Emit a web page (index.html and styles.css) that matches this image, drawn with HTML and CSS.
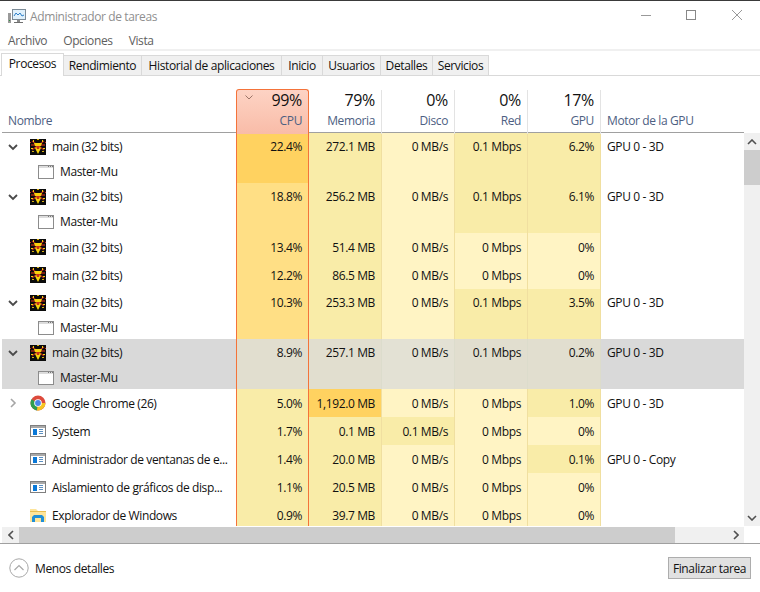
FILE: index.html
```html
<!DOCTYPE html>
<html>
<head>
	<title>Administrador de tareas</title>
	<link rel="stylesheet" href="styles.css">
</head>
<body>
	<svg class="defs" width="0" height="0">
		<symbol id="ico-main" viewBox="0 0 16 16">
			<rect width="16" height="16" fill="#0b0b0b"/>
			<path d="M2 2l12 9M14 2L2 11" stroke="#a8241a" stroke-width="1.500"/>
			<path d="M1 5h14v2H1z" fill="#7a1c12"/>
			<path d="M4 4h8l-1 3H9l2 2-3 6-3-6 2-2H5z" fill="#f7d20c"/>
			<path d="M6 7h4l-1 3H7z" fill="#c8321c"/>
			<rect x="3" y="1" width="1" height="2" fill="#f7d20c"/>
			<rect x="7" y="0" width="2" height="1" fill="#d8b010"/>
			<rect x="12" y="1" width="1" height="2" fill="#f7d20c"/>
			<rect x="1" y="9" width="2" height="1" fill="#f7d20c"/>
			<rect x="13" y="9" width="2" height="1" fill="#f7d20c"/>
			<rect x="2" y="12" width="2" height="1" fill="#d8b010"/>
			<rect x="12" y="12" width="2" height="1" fill="#d8b010"/>
			<rect x="0" y="3" width="1" height="1" fill="#c8321c"/>
			<rect x="15" y="3" width="1" height="1" fill="#c8321c"/>
		</symbol>
		<symbol id="ico-win" viewBox="0 0 16 16">
			<rect x=".5" y="1.5" width="15" height="13" fill="#fff" stroke="#8c8c8c"/>
			<rect x="1" y="2" width="14" height="2" fill="#dcdcdc"/>
			<rect x="10" y="2" width="1" height="1" fill="#777"/>
			<rect x="12" y="2" width="1" height="1" fill="#777"/>
			<rect x="14" y="2" width="1" height="1" fill="#777"/>
		</symbol>
		<symbol id="ico-sys" viewBox="0 0 16 16">
			<rect x=".5" y="2.5" width="15" height="11" fill="#fff" stroke="#7f7f7f"/>
			<rect x="1" y="3" width="14" height="2" fill="#a8a8a8"/>
			<rect x="3" y="6" width="4" height="6" fill="#0a78d7"/>
			<path d="M9 6.500h4M9 8.500h4M9 10.500h4" stroke="#5c8fc0"/>
		</symbol>
		<symbol id="ico-chrome" viewBox="0 0 16 16">
			<circle cx="8" cy="8" r="7.500" fill="#dd4a3c"/>
			<path d="M8 8L1.500 4.200A7.500 7.500 0 0 0 7 15.400z" fill="#2f9e4f"/>
			<path d="M8 8h7.500A7.500 7.500 0 0 1 7 15.400z" fill="#f6c623"/>
			<circle cx="8" cy="8" r="3.800" fill="#fff"/>
			<circle cx="8" cy="8" r="2.900" fill="#4a86e8"/>
		</symbol>
		<symbol id="ico-folder" viewBox="0 0 16 16">
			<path d="M0 2h6l2 2h8v11H0z" fill="#fde49a"/>
			<rect y="4" width="16" height="1" fill="#e8bd50"/>
			<path d="M2 15v-5l2-2h8l2 2v5h-3v-4H5v4z" fill="#1f8fd8"/>
		</symbol>
		<symbol id="chev-down" viewBox="0 0 10 6">
			<path d="M1 1l4 4 4-4" fill="none" stroke="#4a4a4a" stroke-width="1.800"/>
		</symbol>
	</svg>

	<div class="titlebar">
		<svg class="appicon" width="18" height="18" viewBox="0 0 18 18">
			<rect x="0" y="6" width="3" height="10" fill="#9a9a9a"/>
			<rect x="1" y="13" width="1" height="1" fill="#2f8f3f"/>
			<rect x="4.500" y="2.500" width="13" height="10" fill="#dff0fb" stroke="#7b8a96"/>
			<path d="M6 9l2-3 2 2 2-2 2 3 2-1" fill="none" stroke="#2d7fc9"/>
			<rect x="9" y="13" width="3" height="2" fill="#8a8a8a"/>
			<rect x="6" y="15" width="9" height="1" fill="#6f6f6f"/>
		</svg>
		<span class="apptitle">Administrador de tareas</span>
		<div class="winbtns">
			<svg width="12" height="12" viewBox="0 0 12 12"><path d="M2 6.500h10" stroke="#999"/></svg>
			<svg width="12" height="12" viewBox="0 0 12 12"><rect x="1.500" y="1.500" width="9" height="9" fill="none" stroke="#888"/></svg>
			<svg width="12" height="12" viewBox="0 0 12 12"><path d="M1 1l10 10M11 1L1 11" stroke="#999"/></svg>
		</div>
	</div>

	<div class="menubar">
		<span>Archivo</span>
		<span>Opciones</span>
		<span>Vista</span>
	</div>

	<div class="tabs">
		<div class="tab active">Procesos</div>
		<div class="tab t-ren">Rendimiento</div>
		<div class="tab t-his">Historial de aplicaciones</div>
		<div class="tab t-ini">Inicio</div>
		<div class="tab t-usu">Usuarios</div>
		<div class="tab t-det">Detalles</div>
		<div class="tab t-ser">Servicios</div>
	</div>

	<div class="grid-wrap">
		<div class="header cols">
			<div class="hname"><span class="collabel">Nombre</span></div>
			<div class="hcol hcpu">
				<svg class="sortchev" width="8" height="5" viewBox="0 0 8 5"><path d="M.5.500L4 4 7.500.5" fill="none" stroke="#9b7468"/></svg>
				<span class="pct">99%</span><span class="collabel">CPU</span>
			</div>
			<div class="hcol"><span class="pct">79%</span><span class="collabel">Memoria</span></div>
			<div class="hcol"><span class="pct">0%</span><span class="collabel">Disco</span></div>
			<div class="hcol"><span class="pct">0%</span><span class="collabel">Red</span></div>
			<div class="hcol"><span class="pct">17%</span><span class="collabel">GPU</span></div>
			<div class="hmotor"><span class="collabel">Motor de la GPU</span></div>
		</div>

		<div class="body-wrap">
			<div class="rows">
				<div class="row cols group">
					<div class="name">
						<div class="line"><svg class="exp"><use href="#chev-down"/></svg><svg class="ico"><use href="#ico-main"/></svg><span>main (32 bits)</span></div>
						<div class="line sub"><svg class="ico"><use href="#ico-win"/></svg><span>Master-Mu</span></div>
					</div>
					<div class="m cpu h3">22.4%</div><div class="m h1">272.1 MB</div><div class="m h0">0 MB/s</div><div class="m h1">0.1 Mbps</div><div class="m h1">6.2%</div><div class="motor">GPU 0 - 3D</div>
				</div>
				<div class="row cols group">
					<div class="name">
						<div class="line"><svg class="exp"><use href="#chev-down"/></svg><svg class="ico"><use href="#ico-main"/></svg><span>main (32 bits)</span></div>
						<div class="line sub"><svg class="ico"><use href="#ico-win"/></svg><span>Master-Mu</span></div>
					</div>
					<div class="m cpu h2">18.8%</div><div class="m h1">256.2 MB</div><div class="m h0">0 MB/s</div><div class="m h1">0.1 Mbps</div><div class="m h1">6.1%</div><div class="motor">GPU 0 - 3D</div>
				</div>
				<div class="row cols">
					<div class="name"><div class="line"><i class="noexp"></i><svg class="ico"><use href="#ico-main"/></svg><span>main (32 bits)</span></div></div>
					<div class="m cpu h2">13.4%</div><div class="m h1">51.4 MB</div><div class="m h0">0 MB/s</div><div class="m h0">0 Mbps</div><div class="m h0">0%</div><div class="motor"></div>
				</div>
				<div class="row cols">
					<div class="name"><div class="line"><i class="noexp"></i><svg class="ico"><use href="#ico-main"/></svg><span>main (32 bits)</span></div></div>
					<div class="m cpu h2">12.2%</div><div class="m h1">86.5 MB</div><div class="m h0">0 MB/s</div><div class="m h0">0 Mbps</div><div class="m h0">0%</div><div class="motor"></div>
				</div>
				<div class="row cols group">
					<div class="name">
						<div class="line"><svg class="exp"><use href="#chev-down"/></svg><svg class="ico"><use href="#ico-main"/></svg><span>main (32 bits)</span></div>
						<div class="line sub"><svg class="ico"><use href="#ico-win"/></svg><span>Master-Mu</span></div>
					</div>
					<div class="m cpu h2">10.3%</div><div class="m h1">253.3 MB</div><div class="m h0">0 MB/s</div><div class="m h1">0.1 Mbps</div><div class="m h1">3.5%</div><div class="motor">GPU 0 - 3D</div>
				</div>
				<div class="row cols group selected">
					<div class="name">
						<div class="line"><svg class="exp"><use href="#chev-down"/></svg><svg class="ico"><use href="#ico-main"/></svg><span>main (32 bits)</span></div>
						<div class="line sub"><svg class="ico"><use href="#ico-win"/></svg><span>Master-Mu</span></div>
					</div>
					<div class="m cpu">8.9%</div><div class="m">257.1 MB</div><div class="m s0">0 MB/s</div><div class="m">0.1 Mbps</div><div class="m">0.2%</div><div class="motor">GPU 0 - 3D</div>
				</div>
				<div class="row cols">
					<div class="name"><div class="line"><svg class="exp" viewBox="0 0 10 10"><path d="M3 1l4 4-4 4" fill="none" stroke="#a6a6a6" stroke-width="1.600"/></svg><svg class="ico"><use href="#ico-chrome"/></svg><span>Google Chrome (26)</span></div></div>
					<div class="m cpu h1">5.0%</div><div class="m h3">1,192.0 MB</div><div class="m h0">0 MB/s</div><div class="m h0">0 Mbps</div><div class="m h1">1.0%</div><div class="motor">GPU 0 - 3D</div>
				</div>
				<div class="row cols">
					<div class="name"><div class="line"><i class="noexp"></i><svg class="ico"><use href="#ico-sys"/></svg><span>System</span></div></div>
					<div class="m cpu h1">1.7%</div><div class="m h1">0.1 MB</div><div class="m h1">0.1 MB/s</div><div class="m h0">0 Mbps</div><div class="m h0">0%</div><div class="motor"></div>
				</div>
				<div class="row cols">
					<div class="name"><div class="line"><i class="noexp"></i><svg class="ico"><use href="#ico-sys"/></svg><span>Administrador de ventanas de e...</span></div></div>
					<div class="m cpu h1">1.4%</div><div class="m h1">20.0 MB</div><div class="m h0">0 MB/s</div><div class="m h0">0 Mbps</div><div class="m h1">0.1%</div><div class="motor">GPU 0 - Copy</div>
				</div>
				<div class="row cols">
					<div class="name"><div class="line"><i class="noexp"></i><svg class="ico"><use href="#ico-sys"/></svg><span>Aislamiento de gráficos de disp...</span></div></div>
					<div class="m cpu h1">1.1%</div><div class="m h1">20.5 MB</div><div class="m h0">0 MB/s</div><div class="m h0">0 Mbps</div><div class="m h0">0%</div><div class="motor"></div>
				</div>
				<div class="row cols">
					<div class="name"><div class="line"><i class="noexp"></i><svg class="ico"><use href="#ico-folder"/></svg><span>Explorador de Windows</span></div></div>
					<div class="m cpu h1">0.9%</div><div class="m h1">39.7 MB</div><div class="m h0">0 MB/s</div><div class="m h0">0 Mbps</div><div class="m h0">0%</div><div class="motor"></div>
				</div>
			</div>
			<div class="vscroll">
				<div class="sbtn"><svg width="10" height="6" viewBox="0 0 10 6"><path d="M1 5l4-4 4 4" fill="none" stroke="#505050" stroke-width="1.600"/></svg></div>
				<div class="vthumb"></div>
				<div class="vtrack"></div>
				<div class="sbtn"><svg width="10" height="6" viewBox="0 0 10 6"><path d="M1 1l4 4 4-4" fill="none" stroke="#505050" stroke-width="1.600"/></svg></div>
			</div>
		</div>

		<div class="hscroll">
			<div class="sbtn-h"><svg width="6" height="10" viewBox="0 0 6 10"><path d="M5 1L1 5l4 4" fill="none" stroke="#505050" stroke-width="1.600"/></svg></div>
			<div class="hthumb"></div>
			<div class="htrack"></div>
			<div class="sbtn-h"><svg width="6" height="10" viewBox="0 0 6 10"><path d="M1 1l4 4-4 4" fill="none" stroke="#505050" stroke-width="1.600"/></svg></div>
		</div>
	</div>

	<div class="footer">
		<div class="less">
			<svg width="20" height="20" viewBox="0 0 20 20"><circle cx="10" cy="10" r="9.200" fill="none" stroke="#a8a8a8"/><path d="M5.500 12l4.500-4.500 4.500 4.500" fill="none" stroke="#a8a8a8" stroke-width="1.200"/></svg>
			<span>Menos detalles</span>
		</div>
		<button class="endtask">Finalizar tarea</button>
	</div>
</body>
</html>
```

FILE: styles.css
```css
* {
	box-sizing: border-box;
}

html, body {
	margin: 0;
	height: 100%;
}

body {
	width: 760px;
	height: 592px;
	overflow: hidden;
	background: #fff;
	font-family: "Open Sans", "Noto Sans", sans-serif;
	font-size: 12px;
	letter-spacing: -.38px;
	color: #111;
	border-top: 1px solid #3a3a3a;
	display: flex;
	flex-direction: column;
}

.defs {
	position: absolute;
}

.titlebar {
	height: 29px;
	display: flex;
	align-items: center;
	padding-left: 8px;
	flex: none;
}

.appicon {
	margin-right: 4px;
}

.apptitle {
	color: #8f8f8f;
	padding-top: 2px;
}

.winbtns {
	margin-left: auto;
	display: flex;
	gap: 34px;
	padding-right: 17px;
	margin-top: -2px;
}

.menubar {
	height: 21px;
	padding: 2px 0 0 8px;
	display: flex;
	gap: 16px;
	align-items: center;
	color: #5e5e5e;
	border-bottom: 2px solid #f0f0f0;
	flex: none;
}

.tabs {
	height: 25px;
	display: flex;
	align-items: flex-end;
	padding-left: 1px;
	border-bottom: 1px solid #d9d9d9;
	flex: none;
}

.tab {
	height: 20px;
	display: flex;
	align-items: center;
	justify-content: center;
	background: #f0f0f0;
	border: 1px solid #d9d9d9;
	border-left: 0;
	border-bottom: 0;
}

.tab.active {
	width: 63px;
	height: 23px;
	background: #fff;
	border-left: 1px solid #d9d9d9;
	margin-bottom: -1px;
	padding-bottom: 3px;
}

.t-ren { width: 78px; }
.t-his { width: 140px; }
.t-ini { width: 41px; }
.t-usu { width: 58px; }
.t-det { width: 52px; }
.t-ser { width: 56px; }

.grid-wrap {
	flex: 1;
	padding-left: 2px;
	display: flex;
	flex-direction: column;
	min-height: 0;
}

.cols {
	display: grid;
	grid-template-columns: 234px repeat(5, 73px) 143px;
}

.header {
	height: 57px;
	border-bottom: 1px solid #a0a0a0;
	flex: none;
	padding-top: 14px;
	width: 742px;
}

.hname,
.hmotor {
	display: flex;
	align-items: flex-end;
	padding: 0 0 5px 6px;
}

.collabel {
	color: #4d6082;
}

.hcol {
	position: relative;
	display: flex;
	flex-direction: column;
	align-items: flex-end;
	justify-content: flex-end;
	padding: 0 6px 5px 0;
	border-right: 1px solid #e3e3e3;
}

.pct {
	font-size: 16px;
	letter-spacing: -.3px;
	line-height: 20px;
	margin-bottom: 2px;
	color: #111;
}

.hcpu {
	margin-top: -1px;
	border: 1px solid #f4733a;
	border-bottom: 0;
	border-radius: 3px 3px 0 0;
	background: linear-gradient(#fdd3c4, #f9bca8);
}

.sortchev {
	position: absolute;
	left: 8px;
	top: 5px;
}

.body-wrap {
	display: flex;
	height: 393px;
	flex: none;
}

.rows {
	width: 742px;
	height: 393px;
	overflow: hidden;
	flex: none;
}

.row {
	height: 28px;
}

.row.group {
	height: 50px;
}

.name {
	overflow: hidden;
}

.line {
	height: 28px;
	display: flex;
	align-items: center;
	white-space: nowrap;
}

.group .line {
	height: 25px;
	padding-top: 2px;
}

.exp,
.noexp {
	width: 10px;
	height: 10px;
	margin: 0 12px 0 6px;
	flex: none;
}

.ico {
	width: 16px;
	height: 16px;
	margin-right: 6px;
	flex: none;
}

.line.sub {
	padding-left: 36px;
}

.m {
	text-align: right;
	padding: 1px 6px 0 0;
	line-height: 28px;
	border-right: 1px solid #f0dfa0;
}

.group .m,
.group .motor {
	line-height: 25px;
}

.motor {
	padding: 1px 0 0 6px;
	line-height: 28px;
}

.h0 { background: #fff4c4; }
.h1 { background: #f9eca8; }
.h2 { background: #ffdf85; }
.h3 { background: #ffd260; }

.cpu {
	border-left: 1px solid #f4733a;
	border-right: 1px solid #f4733a;
}

.selected {
	background: #d9d9d9;
}

.selected .m {
	background: #e1decf;
	border-right-color: #dcdccc;
}

.selected .m.s0 {
	background: #e3e1d4;
}

.selected .m.cpu {
	border-left-color: #f4733a;
	border-right-color: #f4733a;
}

.vscroll {
	width: 16px;
	background: #f0f0f0;
	display: flex;
	flex-direction: column;
	flex: none;
}

.sbtn {
	height: 17px;
	display: flex;
	align-items: center;
	justify-content: center;
	flex: none;
}

.vthumb {
	height: 35px;
	background: #cdcdcd;
	flex: none;
}

.vtrack {
	flex: 1;
}

.hscroll {
	height: 16px;
	width: 742px;
	background: #f0f0f0;
	display: flex;
	flex: none;
	margin-top: 1px;
}

.sbtn-h {
	width: 17px;
	display: flex;
	align-items: center;
	justify-content: center;
	flex: none;
}

.hthumb {
	width: 656px;
	background: #cdcdcd;
	flex: none;
}

.htrack {
	flex: 1;
}

.footer {
	height: 49px;
	flex: none;
	border-top: 1px solid #a0a0a0;
	display: flex;
	align-items: center;
	justify-content: space-between;
	padding: 0 9px;
}

.less {
	display: flex;
	align-items: center;
	gap: 6px;
}

.endtask {
	width: 83px;
	height: 22px;
	padding: 0;
	background: #e1e1e1;
	border: 1px solid #adadad;
	font-family: inherit;
	font-size: 12px;
	letter-spacing: inherit;
	color: #111;
}
```
